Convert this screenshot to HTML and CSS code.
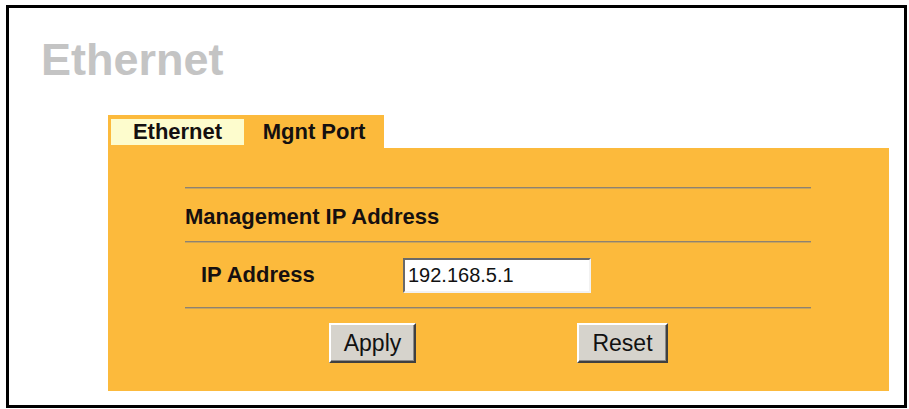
FILE: index.html
```html
<!DOCTYPE html>
<html lang="en">
<head>
<meta charset="utf-8">
<title>Ethernet</title>
<link rel="stylesheet" href="styles.css">
</head>
<body>
<div class="frame">
  <h1 class="page-title">Ethernet</h1>
  <div class="tabs-wrap">
    <div class="tabs">
      <div class="tab tab-inactive">Ethernet</div>
      <div class="tab tab-active">Mgnt Port</div>
    </div>
    <div class="panel">
      <div class="rule"></div>
      <div class="section-title">Management IP Address</div>
      <div class="rule"></div>
      <div class="field-row">
        <label class="field-label" for="ip">IP Address</label>
        <input class="field-input" id="ip" type="text" value="192.168.5.1">
      </div>
      <div class="rule"></div>
      <div class="button-row">
        <button class="btn btn-apply" type="button">Apply</button>
        <button class="btn btn-reset" type="button">Reset</button>
      </div>
    </div>
  </div>
</div>
</body>
</html>
```
FILE: styles.css
```css
html, body {
  margin: 0;
  padding: 0;
  background: #ffffff;
}

body {
  font-family: "Liberation Sans", Arial, sans-serif;
  color: #161010;
}

.frame {
  box-sizing: border-box;
  margin: 5px 2px 0 6px;
  height: 403px;
  border: 3px solid #000000;
  overflow: hidden;
}

.page-title {
  margin: 26px 0 0 0;
  padding-left: 32px;
  font-size: 45px;
  line-height: 52px;
  font-weight: bold;
  color: #c4c4c4;
}

.tabs-wrap {
  margin: 29px 15px 0 99px;
}

.tabs {
  display: inline-flex;
  align-items: flex-start;
  background: #fcba3c;
  padding: 4px 0 0 3px;
  vertical-align: top;
}

.tab {
  font-size: 22px;
  font-weight: bold;
  line-height: 26px;
  text-align: center;
  color: #141010;
}

.tab-inactive {
  width: 133px;
  height: 26px;
  background: #fdfccd;
}

.tab-active {
  width: 140px;
  height: 29px;
  background: #fcba3c;
}

.panel {
  box-sizing: border-box;
  height: 243px;
  background: #fcba3c;
  padding: 39px 78px 0 77px;
}

.rule {
  height: 1px;
  background: #8e8270;
  border-bottom: 1px solid #c9a45a;
}

.section-title {
  padding: 15px 0 11px 0;
  font-size: 22px;
  line-height: 26px;
  font-weight: bold;
}

.field-row {
  display: grid;
  grid-template-columns: 218px 188px;
  align-items: baseline;
  padding: 15px 0 14px 0;
}

.field-label {
  padding-left: 16px;
  font-size: 22px;
  line-height: 26px;
  font-weight: bold;
}

.field-input {
  box-sizing: border-box;
  width: 188px;
  height: 35px;
  margin: 0;
  padding: 0 3px;
  font-family: "Liberation Sans", Arial, sans-serif;
  font-size: 20px;
  color: #111111;
  background: #ffffff;
  border-style: solid;
  border-width: 2px;
  border-color: #6a6a6a #f2f2f2 #f2f2f2 #6a6a6a;
  outline: none;
}

.button-row {
  display: flex;
  gap: 161px;
  padding: 14px 0 0 144px;
}

.btn {
  box-sizing: border-box;
  height: 40px;
  margin: 0;
  padding: 0;
  font-family: "Liberation Sans", Arial, sans-serif;
  font-size: 23px;
  color: #111111;
  background: #d6d3cc;
  border-style: solid;
  border-width: 2px;
  border-color: #ffffff #404040 #404040 #ffffff;
  box-shadow: inset -1px -1px 0 #8a8a8a;
}

.btn-apply {
  width: 87px;
}

.btn-reset {
  width: 91px;
}
```
